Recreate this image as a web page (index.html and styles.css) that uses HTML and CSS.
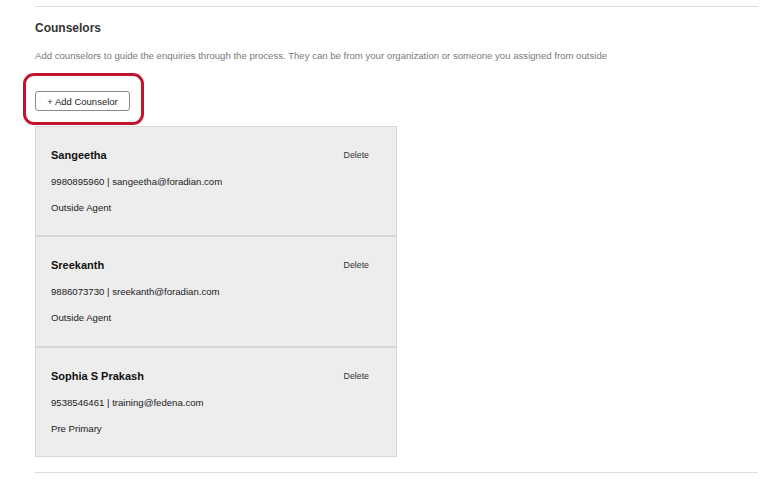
FILE: index.html
```html
<!DOCTYPE html>
<html>
<head>
<meta charset="utf-8">
<link rel="stylesheet" href="styles.css">
</head>
<body>
<div class="page">
  <hr class="rule top">
  <h2 class="title">Counselors</h2>
  <p class="desc">Add counselors to guide the enquiries through the process. They can be from your organization or someone you assigned from outside</p>
  <div class="btn-wrap">
    <button class="btn">+ Add Counselor</button>
  </div>
  <div class="cards">
    <div class="card">
      <div class="card-head"><span class="name">Sangeetha</span><span class="del">Delete</span></div>
      <div class="line">9980895960 | sangeetha@foradian.com</div>
      <div class="line">Outside Agent</div>
    </div>
    <div class="card">
      <div class="card-head"><span class="name">Sreekanth</span><span class="del">Delete</span></div>
      <div class="line">9886073730 | sreekanth@foradian.com</div>
      <div class="line">Outside Agent</div>
    </div>
    <div class="card">
      <div class="card-head"><span class="name">Sophia S Prakash</span><span class="del">Delete</span></div>
      <div class="line">9538546461 | training@fedena.com</div>
      <div class="line">Pre Primary</div>
    </div>
  </div>
  <hr class="rule bottom">
</div>
</body>
</html>
```
FILE: styles.css
```css
html, body {
  margin: 0;
  padding: 0;
  background: #ffffff;
  font-family: "Liberation Sans", Arial, sans-serif;
  color: #222;
}
.page {
  padding: 6px 10px 0 35px;
  width: 723px;
}
.rule {
  border: 0;
  border-top: 1px solid #dcdcdc;
  margin: 0;
}
.title {
  margin: 13px 0 0 0;
  font-size: 12px;
  line-height: 16px;
  font-weight: bold;
  color: #333;
}
.desc {
  margin: 13px 0 0 0;
  font-size: 9.6px;
  line-height: 14px;
  color: #7a7a7a;
}
.btn-wrap {
  position: relative;
  margin-top: 28px;
  width: 95px;
  height: 20px;
}
.btn-wrap::before {
  content: "";
  position: absolute;
  left: -12px;
  top: -18px;
  width: 115px;
  height: 46px;
  border: 3px solid #c4142d;
  border-radius: 11px;
}
.btn {
  display: block;
  width: 95px;
  height: 20px;
  padding: 0;
  background: #fff;
  border: 1px solid #8a8a8a;
  border-radius: 3px;
  font-family: "Liberation Sans", Arial, sans-serif;
  font-size: 9.5px;
  color: #222;
}
.cards {
  margin-top: 15px;
  width: 362px;
}
.card {
  box-sizing: border-box;
  height: 110px;
  background: #ededed;
  border: 1px solid #d6d6d6;
  padding: 20px 27px 0 15px;
}
.card:nth-child(2) {
  height: 111px;
}
.card-head {
  display: flex;
  justify-content: space-between;
  align-items: center;
  height: 16px;
}
.name {
  font-size: 11px;
  font-weight: bold;
  color: #111;
}
.del {
  font-size: 8.8px;
  color: #333;
}
.line {
  margin-top: 12px;
  font-size: 9.6px;
  line-height: 14px;
  color: #222;
}
.line + .line {
  margin-top: 12px;
}
.bottom {
  margin-top: 15px;
}
```
